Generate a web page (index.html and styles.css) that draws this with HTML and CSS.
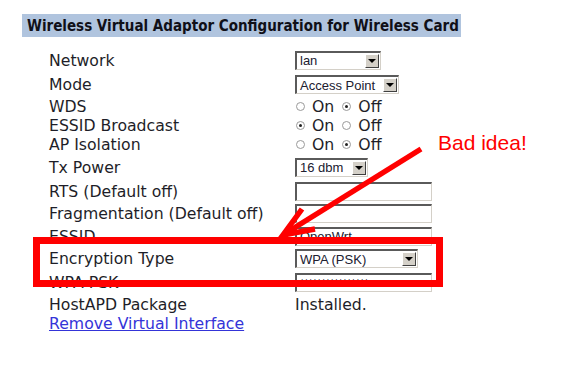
FILE: index.html
```html
<!DOCTYPE html>
<html lang="en">
<head>
    <meta charset="UTF-8">
    <title>Wireless Virtual Adaptor Configuration</title>
    <link rel="stylesheet" href="styles.css">
</head>
<body>
    <div class="page">
        <h2 class="title">Wireless Virtual Adaptor Configuration for Wireless Card</h2>
        <div class="form">
            <div class="label">Network</div>
            <div class="ctl"><span class="select w-net"><span class="val">lan</span><span class="drop"></span></span></div>

            <div class="label">Mode</div>
            <div class="ctl"><span class="select w-mode"><span class="val">Access Point</span><span class="drop"></span></span></div>

            <div class="label">WDS</div>
            <div class="ctl"><span class="radio"></span><span class="opt">On</span><span class="radio on"></span><span class="opt">Off</span></div>

            <div class="label">ESSID Broadcast</div>
            <div class="ctl"><span class="radio on"></span><span class="opt">On</span><span class="radio"></span><span class="opt">Off</span></div>

            <div class="label">AP Isolation</div>
            <div class="ctl"><span class="radio"></span><span class="opt">On</span><span class="radio on"></span><span class="opt">Off</span></div>

            <div class="label">Tx Power</div>
            <div class="ctl"><span class="select w-tx"><span class="val">16 dbm</span><span class="drop"></span></span></div>

            <div class="label">RTS (Default off)</div>
            <div class="ctl"><span class="input"></span></div>

            <div class="label">Fragmentation (Default off)</div>
            <div class="ctl"><span class="input"></span></div>

            <div class="label">ESSID</div>
            <div class="ctl"><span class="input">OpenWrt</span></div>

            <div class="label">Encryption Type</div>
            <div class="ctl"><span class="select w-enc"><span class="val">WPA (PSK)</span><span class="drop"></span></span></div>

            <div class="label">WPA PSK</div>
            <div class="ctl"><span class="input stars">****************</span></div>

            <div class="label">HostAPD Package</div>
            <div class="ctl plain">Installed.</div>

            <div class="label"><a href="#" class="link">Remove Virtual Interface</a></div>
            <div class="ctl"></div>
        </div>
    </div>

    <!-- annotation drawn over the screenshot -->
    <svg class="markup" width="566" height="365" viewBox="0 0 566 365">
        <rect x="36.5" y="240.5" width="403" height="43" fill="none" stroke="#ff0000" stroke-width="7"/>
        <line x1="421" y1="149" x2="286" y2="233" stroke="#ff0000" stroke-width="5.5"/>
        <polyline points="302,209 283,235 315,229" fill="none" stroke="#ff0000" stroke-width="5.5"/>
    </svg>
    <div class="note">Bad idea!</div>
</body>
</html>
```

FILE: styles.css
```css
body {
    margin: 0;
    background: #ffffff;
    font-family: "DejaVu Sans", Verdana, sans-serif;
    color: #1e1e28;
}

.page {
    width: 439px;
    padding: 14px 0 0 22px;
}

.title {
    margin: 0;
    height: 23px;
    line-height: 24px;
    padding-left: 5px;
    background-color: #b0c4de;
    font-family: "DejaVu Sans Condensed", "DejaVu Sans", sans-serif;
    font-stretch: condensed;
    font-size: 15px;
    font-weight: bold;
    color: #101018;
    white-space: nowrap;
}

.form {
    display: grid;
    grid-template-columns: 246px 1fr;
    grid-template-rows: 24px 25px 19px 19px 19px 26px 22px 23px 22px 23px 24px 20px 19px;
    margin-top: 11px;
    padding-left: 27px;
    font-size: 15.7px;
}

.label, .ctl {
    display: flex;
    align-items: center;
    white-space: nowrap;
}

.link {
    color: #3434d8;
    text-decoration: underline;
}

/* old style select boxes */
.select {
    display: flex;
    align-items: center;
    justify-content: space-between;
    box-sizing: border-box;
    height: 19px;
    border-top: 2px solid #5a5a5a;
    border-left: 2px solid #5a5a5a;
    border-right: 1px solid #d4d0c8;
    border-bottom: 1px solid #d4d0c8;
    background: #fff;
    font-family: "Liberation Sans", Arial, sans-serif;
    font-size: 13px;
    color: #202030;
}
.select .val {
    padding-left: 3px;
}
.select .drop {
    position: relative;
    width: 14px;
    height: 14px;
    margin-right: 1px;
    box-sizing: border-box;
    background: #d4d0c8;
    border-top: 1px solid #fff;
    border-left: 1px solid #fff;
    border-right: 1px solid #404040;
    border-bottom: 1px solid #404040;
}
.select .drop::after {
    content: "";
    position: absolute;
    left: 2px;
    top: 4px;
    border-left: 4px solid transparent;
    border-right: 4px solid transparent;
    border-top: 4px solid #000;
}
.w-net { width: 86px; }
.w-mode { width: 104px; }
.w-tx { width: 73px; }
.w-enc { width: 123px; }

.input {
    box-sizing: border-box;
    width: 137px;
    height: 19px;
    padding-left: 3px;
    border-top: 2px solid #5a5a5a;
    border-left: 2px solid #5a5a5a;
    border-right: 1px solid #d4d0c8;
    border-bottom: 1px solid #d4d0c8;
    font-family: "Liberation Sans", Arial, sans-serif;
    font-size: 13px;
    line-height: 16px;
    color: #202030;
}
.stars {
    font-size: 11px;
}

/* radio buttons */
.radio {
    position: relative;
    width: 9px;
    height: 9px;
    margin-left: 1px;
    box-sizing: border-box;
    border: 1px solid #9a9a9a;
    border-radius: 50%;
    background: #fff;
}
.radio.on::after {
    content: "";
    position: absolute;
    left: 2px;
    top: 2px;
    width: 3px;
    height: 3px;
    border-radius: 50%;
    background: #222;
}
.opt {
    margin-left: 7px;
    margin-right: 7px;
}

.markup {
    position: absolute;
    left: 0;
    top: 0;
}

.note {
    position: absolute;
    left: 438px;
    top: 131px;
    font-family: "Liberation Sans", Arial, sans-serif;
    font-size: 21px;
    color: #ff0000;
}
```
